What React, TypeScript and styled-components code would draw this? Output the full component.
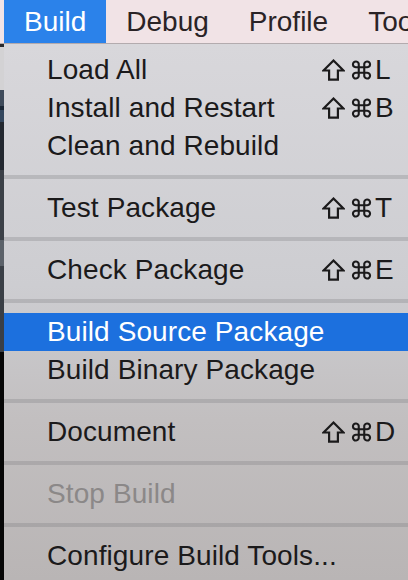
import React from "react";
import styled, { createGlobalStyle } from "styled-components";

const GlobalStyle = createGlobalStyle`
  html, body { margin: 0; padding: 0; background: #000; }
  body { font-family: "Liberation Sans", Arial, sans-serif; overflow: hidden; }
`;

const Screen = styled.div`
  width: 408px;
  height: 580px;
  display: flex;
  flex-direction: column;
  overflow: hidden;
`;

const MenuBar = styled.div`
  height: 43px;
  display: flex;
  align-items: stretch;
  padding-left: 4px;
  background: #f1e3e6;
  border-bottom: 1px solid #b3abae;
  flex-shrink: 0;
  overflow: hidden;
`;

const BarItem = styled.div<{ $active?: boolean }>`
  display: flex;
  align-items: center;
  padding: 0 20px;
  font-size: 28px;
  white-space: nowrap;
  color: ${(p) => (p.$active ? "#ffffff" : "#2a2326")};
  background: ${(p) => (p.$active ? "#2b82ea" : "transparent")};
`;

const Body = styled.div`
  flex: 1;
  display: flex;
`;

const Strip = styled.div`
  width: 4px;
  flex-shrink: 0;
  background: linear-gradient(
    to bottom,
    #2a2a2e 0px,
    #2a2a2e 3px,
    #d3d2d4 3px,
    #d3d2d4 46px,
    #3f4b5b 46px,
    #3f4b5b 62px,
    #1b2736 62px,
    #1b2736 66px,
    #34475e 66px,
    #34475e 78px,
    #232830 78px,
    #232830 126px,
    #3b4047 126px,
    #3b4047 196px,
    #5b6169 196px,
    #5b6169 222px,
    #3a3f46 222px,
    #3a3f46 308px,
    #060606 308px
  );
`;

const Menu = styled.div`
  flex: 1;
  padding-top: 7px;
  display: flex;
  flex-direction: column;
  background: linear-gradient(to bottom, #d8d7db 0%, #cdcdd1 45%, #c2bfc0 70%, #b9b5b5 100%);
`;

const Row = styled.div<{ $selected?: boolean; $disabled?: boolean }>`
  height: 38px;
  flex-shrink: 0;
  display: flex;
  align-items: center;
  padding-left: 43px;
  font-size: 28px;
  letter-spacing: 0.1px;
  white-space: nowrap;
  color: ${(p) => (p.$selected ? "#ffffff" : p.$disabled ? "#8b8888" : "#1b1a1b")};
  background: ${(p) => (p.$selected ? "#1c70de" : "transparent")};
`;

const Label = styled.span`
  flex: 1;
`;

const Shortcut = styled.span`
  width: 86px;
  display: flex;
  align-items: center;
  gap: 5px;
`;

const Glyph = styled.svg`
  width: 23px;
  height: 22px;
  flex-shrink: 0;
  fill: none;
  stroke: currentColor;
  stroke-width: 2.3;
  stroke-linejoin: miter;
`;

const Key = styled.span`
  font-size: 28px;
  margin-left: -3px;
`;

const Separator = styled.div`
  height: 24px;
  flex-shrink: 0;
  display: flex;
  align-items: center;
  &::after {
    content: "";
    flex: 1;
    height: 4px;
    background: rgba(120, 118, 122, 0.28);
  }
`;

const ShiftIcon = () => (
  <Glyph viewBox="0 0 24 23">
    <path d="M12 1.6 L22.4 12 H16.6 V21.6 H7.4 V12 H1.6 Z" />
  </Glyph>
);

const CmdIcon = () => (
  <Glyph viewBox="0 0 24 24">
    <path d="M9 9 V6.5 a3.2 3.2 0 1 0 -2.5 2.5 H17.5 a3.2 3.2 0 1 0 -2.5 -2.5 V17.5 a3.2 3.2 0 1 0 2.5 -2.5 H6.5 a3.2 3.2 0 1 0 2.5 2.5 Z" />
  </Glyph>
);

type Item =
  | { sep: true }
  | { label: string; key?: string; selected?: boolean; disabled?: boolean; sep?: false };

const items: Item[] = [
  { label: "Load All", key: "L" },
  { label: "Install and Restart", key: "B" },
  { label: "Clean and Rebuild" },
  { sep: true },
  { label: "Test Package", key: "T" },
  { sep: true },
  { label: "Check Package", key: "E" },
  { sep: true },
  { label: "Build Source Package", selected: true },
  { label: "Build Binary Package" },
  { sep: true },
  { label: "Document", key: "D" },
  { sep: true },
  { label: "Stop Build", disabled: true },
  { sep: true },
  { label: "Configure Build Tools..." },
];

export default function App() {
  return (
    <Screen>
      <GlobalStyle />
      <MenuBar>
        <BarItem $active>Build</BarItem>
        <BarItem>Debug</BarItem>
        <BarItem>Profile</BarItem>
        <BarItem>Tools</BarItem>
      </MenuBar>
      <Body>
        <Strip />
        <Menu>
          {items.map((it, i) =>
            it.sep ? (
              <Separator key={i} />
            ) : (
              <Row key={i} $selected={it.selected} $disabled={it.disabled}>
                <Label>{it.label}</Label>
                {it.key && (
                  <Shortcut>
                    <ShiftIcon />
                    <CmdIcon />
                    <Key>{it.key}</Key>
                  </Shortcut>
                )}
              </Row>
            )
          )}
        </Menu>
      </Body>
    </Screen>
  );
}
